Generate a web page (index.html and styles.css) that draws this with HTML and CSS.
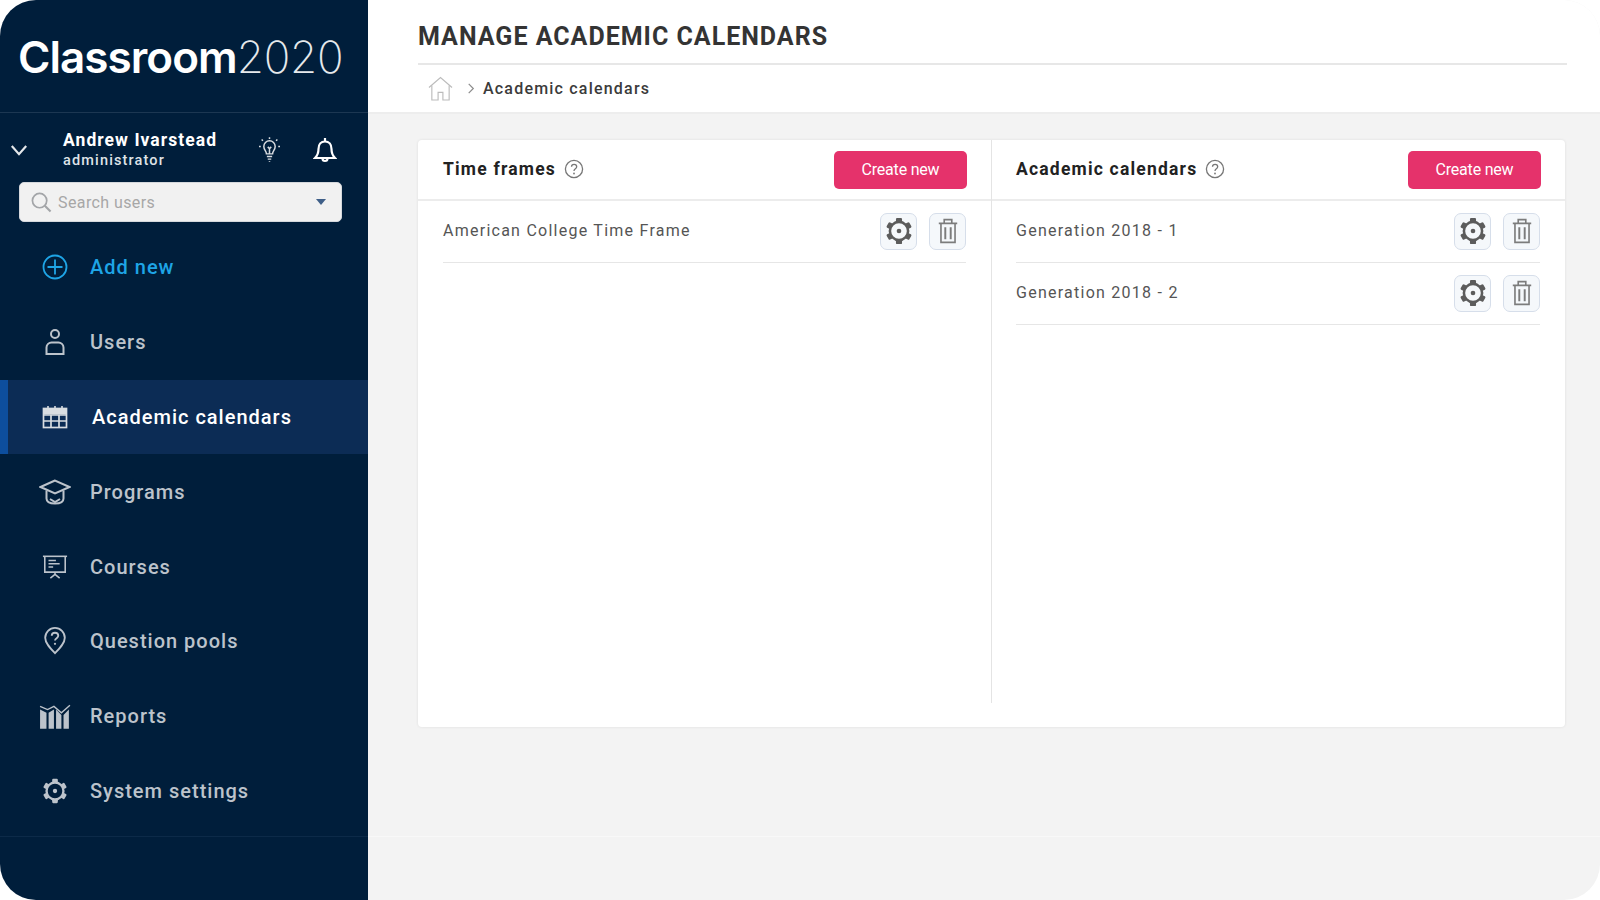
FILE: index.html
```html
<!DOCTYPE html>
<html lang="en">
<head>
    <meta charset="UTF-8">
    <meta name="viewport" content="width=device-width, initial-scale=1.0">
    <title>Manage academic calendars</title>
    <link rel="stylesheet" href="styles.css">
</head>
<body>

    <svg class="sprites" width="0" height="0">
        <symbol id="gear" viewBox="0 0 24 24">
            <circle cx="12" cy="12" r="7.8" fill="none" stroke="currentColor" stroke-width="2.2"/>
            <circle cx="12" cy="12" r="2" fill="currentColor"/>
            <g fill="currentColor">
                <rect x="9.4" y="0.8" width="5.2" height="3.6" rx="1"/>
                <rect x="9.4" y="19.6" width="5.2" height="3.6" rx="1"/>
                <rect x="9.4" y="0.8" width="5.2" height="3.6" rx="1" transform="rotate(60 12 12)"/>
                <rect x="9.4" y="0.8" width="5.2" height="3.6" rx="1" transform="rotate(120 12 12)"/>
                <rect x="9.4" y="0.8" width="5.2" height="3.6" rx="1" transform="rotate(240 12 12)"/>
                <rect x="9.4" y="0.8" width="5.2" height="3.6" rx="1" transform="rotate(300 12 12)"/>
            </g>
        </symbol>
        <symbol id="trash" viewBox="0 0 24 24">
            <g fill="none" stroke="currentColor" stroke-width="1.5">
                <path d="M3.500 5h17M8.500 5V1.500h7V5"/>
                <path d="M5.500 5v17.500h13V5"/>
                <path d="M9.500 8.500v11M14.500 8.500v11" stroke-width="1.800"/>
            </g>
        </symbol>
        <symbol id="help" viewBox="0 0 20 20">
            <circle cx="10" cy="10" r="8.6" fill="none" stroke="currentColor" stroke-width="1.3"/>
            <path d="M7.5 7.8c0-3.2 5.2-3.200 5.200 0 0 2-2.700 2-2.700 4.200" fill="none" stroke="currentColor" stroke-width="1.300"/>
            <circle cx="10" cy="14.500" r="0.900" fill="currentColor"/>
        </symbol>
    </svg>

    <div class="app">
        <aside class="sidebar">
            <div class="logo"><span class="logo-name">Classroom</span><span class="logo-year">2020</span></div>

            <div class="user">
                <svg class="user-toggle" viewBox="0 0 20 14"><path d="M2 2l8 9 8-9" fill="none" stroke="currentColor" stroke-width="2.400"/></svg>
                <div class="user-info">
                    <div class="user-name">Andrew Ivarstead</div>
                    <div class="user-role">administrator</div>
                </div>
                <svg class="user-bulb" viewBox="0 0 24 30">
                    <g fill="none" stroke="currentColor" stroke-width="1.700">
                        <path d="M8.500 20c0-3-3-4.500-3-8.500a6.500 6.500 0 0 1 13 0c0 4-3 5.500-3 8.500z"/>
                        <path d="M9 23h6M10 26h4M12 29v-1"/>
                        <path d="M12 1v2M3 3.500l1.500 1.500M21 3.500L19.500 5M0 11.500h2M22 11.500h2"/>
                        <path d="M10 12l2 2 2-2M12 14v6"/>
                    </g>
                </svg>
                <svg class="user-bell" viewBox="0 0 24 28">
                    <g fill="none" stroke="currentColor" stroke-width="2.200">
                        <path d="M2 22c2.500-2.500 3.500-4 3.500-9 0-4.500 2.500-7.500 6.500-7.500s6.500 3 6.500 7.500c0 5 1 6.500 3.500 9z"/>
                        <path d="M12 5.500V2M9.500 22.500a2.500 2.500 0 0 0 5 0"/>
                    </g>
                </svg>
            </div>

            <div class="search">
                <svg class="search-icon" viewBox="0 0 22 22"><circle cx="9" cy="9" r="7.500" fill="none" stroke="currentColor" stroke-width="1.800"/><path d="M14.500 14.500l6 6" stroke="currentColor" stroke-width="2.200"/></svg>
                <span class="search-text">Search users</span>
                <span class="search-caret"></span>
            </div>

            <nav class="nav">
                <a class="nav-item nav-add">
                    <svg class="nav-icon" viewBox="0 0 26 26"><circle cx="13" cy="13" r="11.500" fill="none" stroke="currentColor" stroke-width="1.800"/><path d="M13 5.500v15M5.500 13h15" stroke="currentColor" stroke-width="1.800"/></svg>
                    Add new
                </a>
                <a class="nav-item">
                    <svg class="nav-icon" viewBox="0 0 26 28"><g fill="none" stroke="currentColor" stroke-width="2"><circle cx="13" cy="6" r="4"/><path d="M4.500 26v-6.500c0-3 2.500-5 5-5h7c2.500 0 5 2 5 5V26z"/></g></svg>
                    Users
                </a>
                <a class="nav-item nav-active">
                    <svg class="nav-icon" viewBox="0 0 26 24"><g fill="none" stroke="currentColor" stroke-width="1.700"><rect x="1.500" y="3.500" width="23" height="19"/><path d="M1.500 10h23M1.500 16h23M9 10v12.500M17 10v12.500"/></g><path d="M1.500 3h23v6.500h-23z" fill="currentColor"/><path d="M6 1v3M13 1v3M20 1v3" stroke="currentColor" stroke-width="1.600"/></svg>
                    Academic calendars
                </a>
                <a class="nav-item">
                    <svg class="nav-icon nav-icon-wide" viewBox="0 0 32 26"><g fill="none" stroke="currentColor" stroke-width="2"><path d="M16 1.500L1.500 8 16 14.500 30.500 8z"/><path d="M7.500 11.500v8c0 3.500 4 5 8.500 5s8.500-1.500 8.500-5v-8"/><path d="M11 20l5 3 5-3"/></g></svg>
                    Programs
                </a>
                <a class="nav-item">
                    <svg class="nav-icon" viewBox="0 0 28 26"><g fill="none" stroke="currentColor" stroke-width="1.700"><path d="M1 1.500h26"/><path d="M3 1.500v17h22v-17"/><path d="M7 6h8M7 9.500h12M7 13h5" stroke-width="1.400"/><path d="M14 18.500v3M14 21l-5 4M14 21l5 4"/></g></svg>
                    Courses
                </a>
                <a class="nav-item">
                    <svg class="nav-icon" viewBox="0 0 24 30"><g fill="none" stroke="currentColor" stroke-width="2"><path d="M12 28C7 23 1.500 17.500 1.500 11.500a10.500 10.500 0 0 1 21 0C22.500 17.500 17 23 12 28z"/><path d="M8.500 9.500c0-4.500 7-4.500 7 0 0 2.500-3.500 2.500-3.500 5"/></g><circle cx="12" cy="18" r="1.200" fill="currentColor"/></svg>
                    Question pools
                </a>
                <a class="nav-item">
                    <svg class="nav-icon nav-icon-wide" viewBox="0 0 30 24"><g fill="currentColor"><path d="M1 6l6 3v15H1zM9 9l5-3v18H9zM16 6l5 5v13h-5zM23 11l5-5v18h-5z"/></g><path d="M1 3l7 3 6-3 7 6 8-7" fill="none" stroke="currentColor" stroke-width="1.300"/></svg>
                    Reports
                </a>
                <a class="nav-item">
                    <svg class="nav-icon"><use href="#gear"/></svg>
                    System settings
                </a>
            </nav>

            <div class="sidebar-foot"></div>
        </aside>

        <main class="main">
            <header class="page-head">
                <h1 class="page-title">MANAGE ACADEMIC CALENDARS</h1>
                <div class="crumbs">
                    <svg class="crumb-home" viewBox="0 0 26 26"><g fill="none" stroke="currentColor" stroke-width="1.200"><path d="M1 12L13 1.500 25 12"/><path d="M4 10v15h6.500v-8h5v8H22V10"/></g></svg>
                    <svg class="crumb-sep" viewBox="0 0 8 12"><path d="M1.500 1l5 5-5 5" fill="none" stroke="currentColor" stroke-width="1.300"/></svg>
                    <span class="crumb-text">Academic calendars</span>
                </div>
            </header>

            <div class="content">
                <section class="card">
                    <div class="column column-first">
                        <div class="column-head">
                            <h2 class="column-title">Time frames</h2>
                            <svg class="help"><use href="#help"/></svg>
                            <button class="btn-create">Create new</button>
                        </div>
                        <div class="row">
                            <span class="row-name">American College Time Frame</span>
                            <button class="icon-btn"><svg class="icon-gear"><use href="#gear"/></svg></button>
                            <button class="icon-btn"><svg class="icon-trash"><use href="#trash"/></svg></button>
                        </div>
                    </div>
                    <div class="column">
                        <div class="column-head">
                            <h2 class="column-title">Academic calendars</h2>
                            <svg class="help"><use href="#help"/></svg>
                            <button class="btn-create">Create new</button>
                        </div>
                        <div class="row">
                            <span class="row-name">Generation 2018 - 1</span>
                            <button class="icon-btn"><svg class="icon-gear"><use href="#gear"/></svg></button>
                            <button class="icon-btn"><svg class="icon-trash"><use href="#trash"/></svg></button>
                        </div>
                        <div class="row">
                            <span class="row-name">Generation 2018 - 2</span>
                            <button class="icon-btn"><svg class="icon-gear"><use href="#gear"/></svg></button>
                            <button class="icon-btn"><svg class="icon-trash"><use href="#trash"/></svg></button>
                        </div>
                    </div>
                </section>
            </div>

            <div class="main-foot"></div>
        </main>
    </div>

</body>
</html>
```

FILE: styles.css
```css
html, body {
    margin: 0;
    height: 100%;
    background: #fff;
}
body {
    font-family: Roboto, "Liberation Sans", sans-serif;
    overflow: hidden;
}
.sprites {
    display: none;
}
.app {
    display: flex;
    height: 900px;
    border-radius: 36px;
    overflow: hidden;
}

/* sidebar */
.sidebar {
    width: 368px;
    flex: none;
    display: flex;
    flex-direction: column;
    background: #001e3b;
    color: #bcc3cb;
}
.logo {
    height: 113px;
    box-sizing: border-box;
    padding: 30px 0 0 18px;
    border-bottom: 1px solid #1c3752;
    color: #fff;
    font-family: Inter, sans-serif;
    font-size: 44px;
    line-height: 54px;
    white-space: nowrap;
}
.logo-name {
    font-weight: 600;
    letter-spacing: -0.95px;
}
.logo-year {
    font-weight: 200;
    font-size: 44px;
    letter-spacing: -0.2px;
    color: #e6e9ec;
}
.user {
    height: 69px;
    display: flex;
    align-items: center;
    color: #fff;
    padding-top: 4px;
    box-sizing: border-box;
}
.user-toggle {
    width: 18px;
    height: 13px;
    margin: 2px 0 0 10px;
    color: #e4e7ea;
}
.user-info {
    margin-left: 35px;
    width: 196px;
}
.user-name {
    font-size: 17.5px;
    line-height: 22px;
    font-weight: 700;
    letter-spacing: 1.05px;
}
.user-role {
    font-size: 14.5px;
    line-height: 20px;
    font-weight: 500;
    letter-spacing: 1.15px;
    color: #dfe3e7;
}
.user-bulb {
    width: 21px;
    height: 27px;
    margin-right: 33px;
    color: #d8dce0;
}
.user-bell {
    width: 24px;
    height: 28px;
}
.search {
    margin: 0 26px 0 19px;
    height: 40px;
    display: flex;
    align-items: center;
    background: #f1f1f1;
    border-radius: 5px;
    border: 1px solid #d5d8dc;
    box-sizing: border-box;
    color: #a7a7a7;
}
.search-icon {
    width: 21px;
    height: 21px;
    margin-left: 11px;
    color: #a3a5a8;
}
.search-text {
    margin-left: 6px;
    flex: 1;
    font-size: 16px;
    letter-spacing: 0.4px;
}
.search-caret {
    width: 0;
    height: 0;
    margin-right: 15px;
    border-left: 5px solid transparent;
    border-right: 5px solid transparent;
    border-top: 6px solid #3f5f88;
}
.nav {
    margin-top: 8px;
    display: flex;
    flex-direction: column;
}
.nav-item {
    height: 74.8px;
    display: flex;
    align-items: center;
    box-sizing: border-box;
    padding-left: 42px;
    font-size: 20px;
    font-weight: 500;
    letter-spacing: 1px;
}
.nav-icon {
    width: 26px;
    height: 28px;
    margin-right: 22px;
    flex: none;
}
.nav-icon-wide {
    width: 32px;
    margin-left: -3px;
    margin-right: 19px;
}
.nav-add {
    color: #1ea5e6;
}
.nav-active {
    background: #0c2c55;
    border-left: 8px solid #0d4e9d;
    padding-left: 34px;
    color: #fff;
}
.nav-active .nav-icon {
    margin-right: 24px;
    color: #d9dde1;
}
.sidebar-foot {
    margin-top: 8px;
    flex: 1;
    border-top: 1px solid #0c2a48;
}

/* main area */
.main {
    flex: 1;
    display: flex;
    flex-direction: column;
    background: #f3f3f3;
}
.page-head {
    height: 114px;
    box-sizing: border-box;
    padding: 0 33px 0 50px;
    background: #fff;
    border-bottom: 2px solid #ededed;
}
.page-title {
    margin: 0;
    height: 65px;
    box-sizing: border-box;
    padding-top: 22px;
    border-bottom: 2px solid #e7e7e7;
    font-size: 25px;
    line-height: 30px;
    font-weight: 700;
    letter-spacing: 1px;
    color: #343434;
}
.crumbs {
    height: 47px;
    display: flex;
    align-items: center;
    padding-left: 10px;
}
.crumb-home {
    width: 25px;
    height: 25px;
    color: #bcbcbc;
}
.crumb-sep {
    width: 8px;
    height: 11px;
    margin-left: 14px;
    color: #8c8c8c;
}
.crumb-text {
    margin-left: 8px;
    font-size: 16px;
    font-weight: 500;
    letter-spacing: 1.2px;
    color: #3b3b3b;
}
.content {
    flex: 1;
    padding: 26px 35px 0 50px;
}
.card {
    height: 587px;
    display: flex;
    background: #fff;
    border-radius: 4px;
    box-shadow: 0 0 3px rgba(0,0,0,0.09);
}
.column {
    flex: 1;
    position: relative;
    min-width: 0;
}
.column-first {
    flex: 0 0 573px;
}
.column + .column::before {
    content: "";
    position: absolute;
    left: 0;
    top: 0;
    bottom: 24px;
    border-left: 1px solid #e4e4e4;
}
.column-head {
    height: 61px;
    display: flex;
    align-items: center;
    box-sizing: border-box;
    padding: 0 24px 0 25px;
    border-bottom: 2px solid #ececec;
}
.column-title {
    margin: 0 0 2px;
    font-size: 17.5px;
    font-weight: 700;
    letter-spacing: 1.2px;
    color: #222;
}
.help {
    width: 20px;
    height: 20px;
    margin: 0 auto 2px 8px;
    color: #777;
}
.btn-create {
    width: 133px;
    height: 38px;
    background: #e5326b;
    color: #fff;
    border: none;
    border-radius: 5px;
    font-family: Roboto, sans-serif;
    font-size: 16px;
    letter-spacing: -0.2px;
}
.row {
    height: 62px;
    margin: 0 25px;
    display: flex;
    align-items: center;
    gap: 12px;
    box-sizing: border-box;
    border-bottom: 1px solid #e6e6e6;
    padding-bottom: 1px;
}
.row-name {
    flex: 1;
    font-size: 16px;
    letter-spacing: 1.25px;
    color: #555;
    margin-top: -2px;
}
.icon-btn {
    width: 37px;
    height: 37px;
    padding: 0;
    display: flex;
    align-items: center;
    justify-content: center;
    background: #f5f8fb;
    border: 1px solid #d6deea;
    border-radius: 7px;
}
.icon-gear {
    width: 28px;
    height: 28px;
    color: #5c5c5c;
}
.icon-trash {
    width: 26px;
    height: 26px;
    color: #7c7c7c;
}
.main-foot {
    height: 63px;
    border-top: 1px solid #f8f8f8;
}
```
